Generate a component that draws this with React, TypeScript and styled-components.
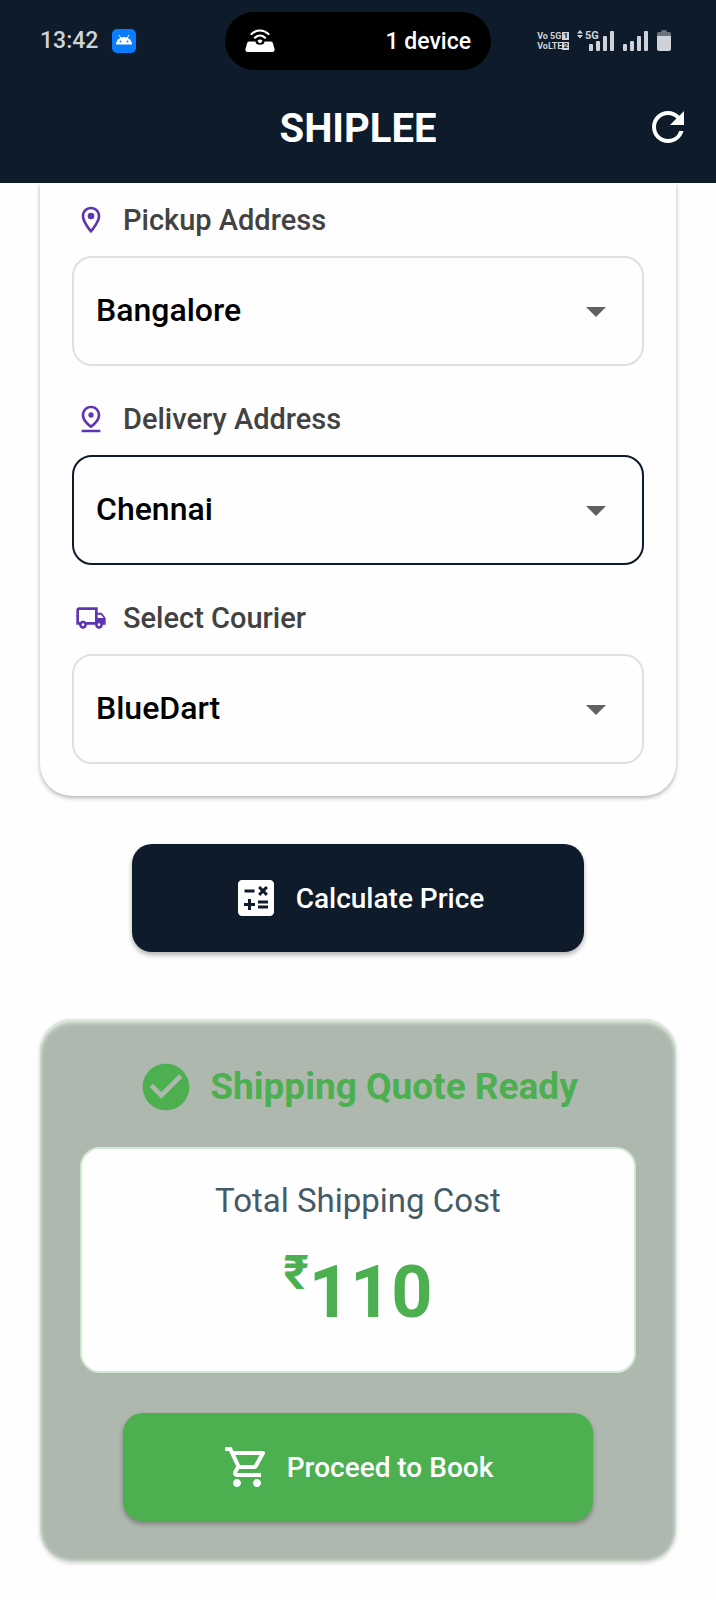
import React from 'react';
import styled, { createGlobalStyle } from 'styled-components';
import {
  MdArrowDropDown,
  MdCalculate,
  MdCheckCircle,
  MdOutlineLocalShipping,
  MdOutlineLocationOn,
  MdOutlinePinDrop,
  MdOutlineShoppingCart,
  MdRefresh,
} from 'react-icons/md';

const navy = '#0d1b2a';
const green = '#4caf50';

const GlobalStyle = createGlobalStyle`
  *, *::before, *::after { box-sizing: border-box; }
  body {
    margin: 0;
    background: #fefefe;
    font-family: Roboto, "Liberation Sans", sans-serif;
  }
  svg { display: block; flex: none; }
`;

const Header = styled.header`
  position: relative;
  z-index: 1;
  background: ${navy};
  color: #fff;
`;

const StatusBar = styled.div`
  display: grid;
  grid-template-columns: 1fr 266px 1fr;
  align-items: center;
  padding: 12px 40px 0;
  color: #cfd3d9;
`;

const StatusLeft = styled.div`
  display: flex;
  align-items: center;
  gap: 14px;
`;

const Clock = styled.time`
  font-family: Roboto, sans-serif;
  font-size: 23px;
  line-height: 24px;
  font-weight: 500;
`;

const Island = styled.div`
  display: flex;
  align-items: center;
  justify-content: space-between;
  height: 58px;
  padding: 0 20px;
  border-radius: 29px;
  background: #000;
  color: #fff;
  font-size: 23px;
  font-weight: 500;
`;

const StatusRight = styled.div`
  display: flex;
  justify-content: flex-end;
  align-items: center;
  gap: 8px;
  padding-right: 5px;
`;

const VoiceNetwork = styled.div`
  font-size: 9px;
  line-height: 10px;
  font-weight: 700;
  white-space: nowrap;
`;

const VoiceLine = styled.div`
  display: flex;
  align-items: center;
  justify-content: space-between;
`;

const SimBadge = styled.span`
  padding: 0 1px;
  background: currentColor;
  font-size: 8px;
  line-height: 8px;

  span { color: ${navy}; }
`;

const Toolbar = styled.div`
  display: grid;
  grid-template-columns: 48px 1fr 48px;
  align-items: center;
  height: 113px;
  padding: 0 24px;
`;

const Title = styled.h1`
  grid-column: 2;
  margin: 0;
  padding-top: 4px;
  text-align: center;
  font-size: 40px;
  line-height: 48px;
  font-weight: 700;
`;

const IconButton = styled.button`
  padding: 0;
  border: 0;
  background: none;
  color: inherit;
  cursor: pointer;
`;

const Main = styled.main`
  display: flex;
  flex-direction: column;
  padding: 0 40px 39px;
`;

const FormCard = styled.form`
  display: flex;
  flex-direction: column;
  gap: 32px;
  padding: 16px 32px 32px;
  border-radius: 0 0 32px 32px;
  background: #fefefe;
  box-shadow: 0 2px 4px rgba(0, 0, 0, 0.3);
`;

const Field = styled.div`
  display: flex;
  flex-direction: column;
  gap: 16px;
`;

const FieldLabel = styled.label`
  display: flex;
  align-items: center;
  gap: 16px;
  height: 41px;
  padding-left: 3px;
  color: #424242;
  font-size: 29px;
  font-weight: 500;

  svg { color: #5e35b1; }
`;

const SelectBox = styled.div`
  display: grid;
  grid-template-columns: 1fr 72px;
  align-items: center;
  color: #616161;

  svg {
    grid-area: 1 / 2;
    pointer-events: none;
    z-index: 1;
  }
`;

const Select = styled.select<{ $active?: boolean }>`
  grid-area: 1 / 1 / 2 / 3;
  appearance: none;
  width: 100%;
  height: 110px;
  padding: 0 72px 2px 22px;
  border: 2px solid ${(p) => (p.$active ? navy : '#e0e0e0')};
  border-radius: 20px;
  outline: none;
  background: transparent;
  color: #000;
  font-family: inherit;
  font-size: 32px;
  font-weight: 500;
`;

const ActionButton = styled.button<{ $color: string }>`
  display: flex;
  align-items: center;
  align-self: center;
  justify-content: center;
  gap: 16px;
  height: 108px;
  padding: 0 100px;
  border: 0;
  border-radius: 20px;
  background: ${(p) => p.$color};
  box-shadow: 0 3px 5px rgba(0, 0, 0, 0.3);
  color: #fff;
  font-family: inherit;
  font-size: 28px;
  font-weight: 500;
  white-space: nowrap;
  cursor: pointer;
`;

const CalculateRow = styled.div`
  display: flex;
  justify-content: center;
  padding: 48px 0 67px;
`;

const QuoteCard = styled.section`
  display: flex;
  flex-direction: column;
  padding: 40px;
  border-radius: 32px;
  background: #afb8af;
  box-shadow:
    inset 0 4px 4px rgba(232, 245, 233, 0.8),
    inset 0 0 4px rgba(232, 245, 233, 0.8),
    0 2px 4px rgba(0, 0, 0, 0.2);
`;

const QuoteHeading = styled.h2`
  display: flex;
  align-items: center;
  justify-content: center;
  gap: 16px;
  margin: 0 0 32px;
  color: ${green};
  font-size: 37px;
  line-height: 56px;
  font-weight: 700;
`;

const CostPanel = styled.div`
  display: flex;
  flex-direction: column;
  align-items: center;
  gap: 24px;
  margin-bottom: 40px;
  padding: 32px 30px 30px;
  border: 2px solid #cfe8d1;
  border-radius: 20px;
  background: #fefefe;
`;

const CostLabel = styled.p`
  margin: 0;
  color: #455a64;
  font-size: 33px;
  line-height: 40px;
`;

const Price = styled.p`
  display: flex;
  align-items: flex-start;
  margin: 0;
  color: ${green};
  font-size: 72px;
  line-height: 96px;
  font-weight: 700;
`;

const Currency = styled.span`
  font-size: 48px;
  line-height: 56px;
`;

const AndroidBadge = () => (
  <svg width="24" height="24" viewBox="0 0 24 24" aria-hidden="true">
    <rect width="24" height="24" rx="5" fill="#0a7cff" />
    <path d="M4 15.500a8 7.500 0 0 1 16 0z" fill="#fff" />
    <path d="M7 6l2 3.500M17 6l-2 3.500" stroke="#fff" strokeWidth="1" />
    <circle cx="8.500" cy="12.500" r="1" fill="#0a7cff" />
    <circle cx="15.500" cy="12.500" r="1" fill="#0a7cff" />
  </svg>
);

const HotspotIcon = () => (
  <svg width="30" height="24" viewBox="0 0 30 24" aria-hidden="true">
    <path
      d="M4 12.500h22q1.500 0 2 2l1.500 5.500q.5 3-2 3h-25q-2.500 0-2-3l1.500-5.500q.5-2 2-2z"
      fill="#fff"
    />
    <path d="M10.500 12.300h9a4.500 3.500 0 0 1-9 0z" fill="#000" />
    <path d="M12.600 11.500q2.400-2 4.800 0l-1 2q-1.400 1-2.800 0z" fill="#fff" />
    <path
      d="M6.500 5c5-4.700 12-4.700 17 0M10 8.700c3-2.700 7-2.700 10 0"
      fill="none"
      stroke="#fff"
      strokeWidth="2.200"
      strokeLinecap="round"
    />
  </svg>
);

const SignalWithNetwork = () => (
  <svg width="38" height="22" viewBox="0 0 38 22" fill="currentColor" aria-hidden="true">
    <path d="M3 0l3 3.500H0zM3 8.500L0 5H6z" />
    <text x="8" y="9" fontSize="11" fontWeight="700">5G</text>
    <rect x="12" y="14" width="4" height="7" rx="1" />
    <rect x="19" y="11" width="4" height="10" rx="1" />
    <rect x="26" y="6" width="4" height="15" rx="1" />
    <rect x="33" y="1" width="4" height="20" rx="1" />
  </svg>
);

const Signal = () => (
  <svg width="26" height="22" viewBox="0 0 26 22" fill="currentColor" aria-hidden="true">
    <rect x="0" y="14" width="4" height="7" rx="1" />
    <rect x="7" y="11" width="4" height="10" rx="1" />
    <rect x="14" y="6" width="4" height="15" rx="1" />
    <rect x="21" y="1" width="4" height="20" rx="1" />
  </svg>
);

const Battery = () => (
  <svg width="14" height="22" viewBox="0 0 14 22" aria-hidden="true">
    <path d="M0 6V4q0-2 2-2h2q0-2 2-2h2q2 0 2 2h2q2 0 2 2v2z" fill="#6b727b" />
    <path d="M0 6h14v13q0 2-2 2H2q-2 0-2-2z" fill="currentColor" />
  </svg>
);

type DropdownProps = {
  id: string;
  label: string;
  icon: React.ReactNode;
  options: string[];
  active?: boolean;
};

const Dropdown = ({ id, label, icon, options, active }: DropdownProps) => (
  <Field>
    <FieldLabel htmlFor={id}>
      {icon}
      {label}
    </FieldLabel>
    <SelectBox>
      <Select id={id} $active={active} defaultValue={options[0]}>
        {options.map((o) => (
          <option key={o}>{o}</option>
        ))}
      </Select>
      <MdArrowDropDown size={48} />
    </SelectBox>
  </Field>
);

export default function App() {
  return (
    <>
      <GlobalStyle />
      <Header>
        <StatusBar>
          <StatusLeft>
            <Clock>13:42</Clock>
            <AndroidBadge />
          </StatusLeft>
          <Island>
            <HotspotIcon />
            1 device
          </Island>
          <StatusRight>
            <VoiceNetwork>
              <VoiceLine>
                Vo 5G<SimBadge><span>1</span></SimBadge>
              </VoiceLine>
              <VoiceLine>
                VoLTE<SimBadge><span>2</span></SimBadge>
              </VoiceLine>
            </VoiceNetwork>
            <SignalWithNetwork />
            <Signal />
            <Battery />
          </StatusRight>
        </StatusBar>
        <Toolbar>
          <Title>SHIPLEE</Title>
          <IconButton type="button" aria-label="Refresh">
            <MdRefresh size={48} />
          </IconButton>
        </Toolbar>
      </Header>
      <Main>
        <FormCard>
          <Dropdown
            id="pickup"
            label="Pickup Address"
            icon={<MdOutlineLocationOn size={32} />}
            options={['Bangalore']}
          />
          <Dropdown
            id="delivery"
            label="Delivery Address"
            icon={<MdOutlinePinDrop size={32} />}
            options={['Chennai']}
            active
          />
          <Dropdown
            id="courier"
            label="Select Courier"
            icon={<MdOutlineLocalShipping size={32} />}
            options={['BlueDart']}
          />
        </FormCard>
        <CalculateRow>
          <ActionButton type="button" $color={navy}>
            <MdCalculate size={48} />
            Calculate Price
          </ActionButton>
        </CalculateRow>
        <QuoteCard>
          <QuoteHeading>
            <MdCheckCircle size={56} />
            Shipping Quote Ready
          </QuoteHeading>
          <CostPanel>
            <CostLabel>Total Shipping Cost</CostLabel>
            <Price>
              <Currency>₹</Currency>110
            </Price>
          </CostPanel>
          <ActionButton type="button" $color={green}>
            <MdOutlineShoppingCart size={48} />
            Proceed to Book
          </ActionButton>
        </QuoteCard>
      </Main>
    </>
  );
}
